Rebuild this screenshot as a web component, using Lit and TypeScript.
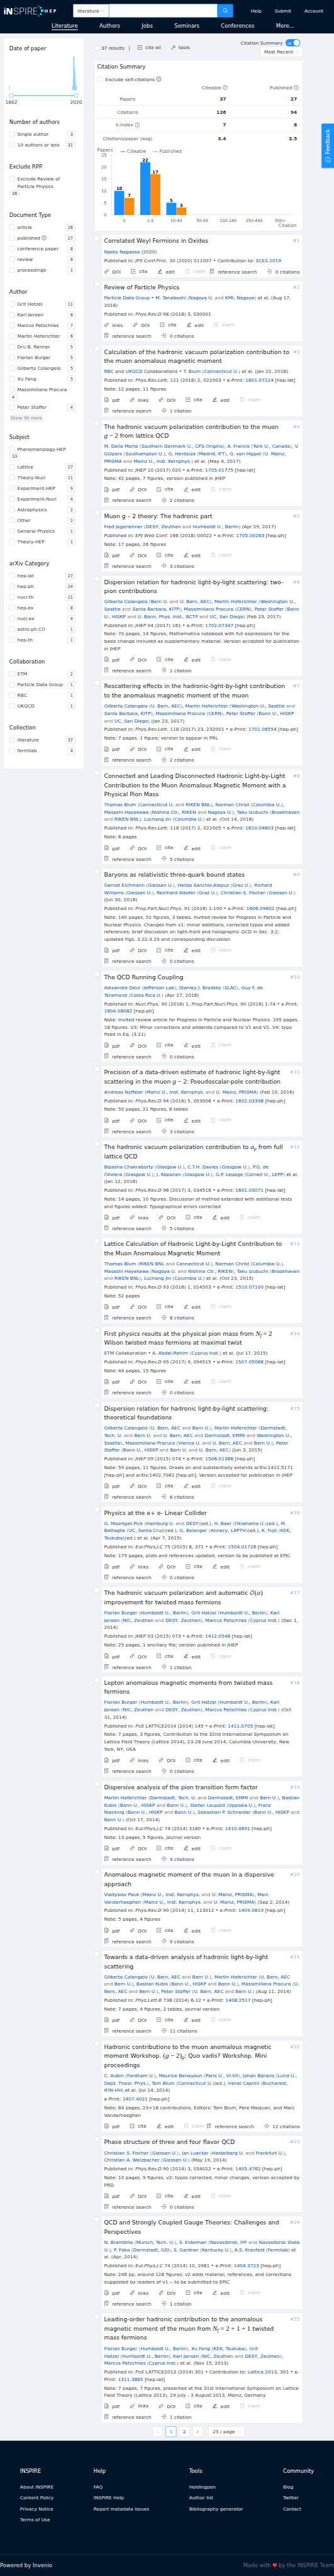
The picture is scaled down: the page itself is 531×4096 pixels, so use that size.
import { LitElement, html, svg, css } from "lit";
import { customElement, property } from "lit/decorators.js";

type Paper = {
  title: string;
  collab?: string;
  authors: string;
  tail: string;
  pub: string;
  note?: string;
  acts: string;
  cites: string;
};

const PAPERS: Paper[] = [
  { title: "Correlated Weyl Fermions in Oxides", authors: "Naoto Nagaosa", tail: "(2020)", pub: "Published in: _JPS Conf.Proc._ 30 (2020) 011007 • Contribution to: {SCES 2019}", acts: "DOI cite edit claim", cites: "0 citations" },
  { title: "Review of Particle Physics", collab: "{Particle Data Group} • ", authors: "M. Tanabashi|Nagoya U.|KMI, Nagoya", tail: "et al. (Aug 17, 2018)", pub: "Published in: _Phys.Rev.D_ 98 (2018) 3, 030001", acts: "links DOI cite edit claim", cites: "0 citations" },
  { title: "Calculation of the hadronic vacuum polarization contribution to the muon anomalous magnetic moment", collab: "{RBC} and {UKQCD} Collaborations • ", authors: "T. Blum|Connecticut U.", tail: "et al. (Jan 22, 2018)", pub: "Published in: _Phys.Rev.Lett._ 121 (2018) 2, 022003 • e-Print: {1801.07224} [hep-lat]", note: "12 pages, 11 figures", acts: "pdf links DOI cite edit claim", cites: "1 citation" },
  { title: "The hadronic vacuum polarization contribution to the muon $g−2$ from lattice QCD", authors: "M. Della Morte|Southern Denmark U., CP3-Origins;A. Francis|York U., Canada;V. Gülpers|Southampton U.;G. Herdoíza|Madrid, IFT;G. von Hippel|U. Mainz, PRISMA|Mainz U., Inst. Kernphys.", tail: "et al. (May 4, 2017)", pub: "Published in: _JHEP_ 10 (2017) 020 • e-Print: {1705.01775} [hep-lat]", note: "42 pages, 7 figures, version published in JHEP", acts: "pdf DOI cite edit claim", cites: "2 citations" },
  { title: "Muon g – 2 theory: The hadronic part", authors: "Fred Jegerlehner|DESY, Zeuthen|Humboldt U., Berlin", tail: "(Apr 29, 2017)", pub: "Published in: _EPJ Web Conf._ 166 (2018) 00022 • e-Print: {1705.00263} [hep-ph]", note: "17 pages, 26 figures", acts: "pdf DOI cite edit claim", cites: "3 citations" },
  { title: "Dispersion relation for hadronic light-by-light scattering: two-pion contributions", authors: "Gilberto Colangelo|Bern U.|U. Bern, AEC;Martin Hoferichter|Washington U., Seattle|Santa Barbara, KITP;Massimiliano Procura|CERN;Peter Stoffer|Bonn U., HISKP|U. Bonn, Phys. Inst., BCTP|UC, San Diego", tail: "(Feb 23, 2017)", pub: "Published in: _JHEP_ 04 (2017) 161 • e-Print: {1702.07347} [hep-ph]", note: "70 pages, 14 figures, Mathematica notebook with full expressions for the basis change included as supplementary material. Version accepted for publication in JHEP", acts: "pdf DOI cite edit claim", cites: "1 citation" },
  { title: "Rescattering effects in the hadronic-light-by-light contribution to the anomalous magnetic moment of the muon", authors: "Gilberto Colangelo|U. Bern, AEC;Martin Hoferichter|Washington U., Seattle|Santa Barbara, KITP;Massimiliano Procura|CERN;Peter Stoffer|Bonn U., HISKP|UC, San Diego", tail: "(Jan 23, 2017)", pub: "Published in: _Phys.Rev.Lett._ 118 (2017) 23, 232001 • e-Print: {1701.06554} [hep-ph]", note: "7 pages, 1 figure; version to appear in PRL", acts: "pdf DOI cite edit claim", cites: "2 citations" },
  { title: "Connected and Leading Disconnected Hadronic Light-by-Light Contribution to the Muon Anomalous Magnetic Moment with a Physical Pion Mass", authors: "Thomas Blum|Connecticut U.|RIKEN BNL;Norman Christ|Columbia U.;Masashi Hayakawa|Nishina Ctr., RIKEN|Nagoya U.;Taku Izubuchi|Brookhaven|RIKEN BNL;Luchang Jin|Columbia U.", tail: "et al. (Oct 14, 2016)", pub: "Published in: _Phys.Rev.Lett._ 118 (2017) 2, 022005 • e-Print: {1610.04603} [hep-lat]", note: "6 pages", acts: "pdf DOI cite edit claim", cites: "5 citations" },
  { title: "Baryons as relativistic three-quark bound states", authors: "Gernot Eichmann|Giessen U.;Helios Sanchis-Alepuz|Graz U.;Richard Williams|Giessen U.;Reinhard Alkofer|Graz U.;Christian S. Fischer|Giessen U.", tail: "(Jun 30, 2016)", pub: "Published in: _Prog.Part.Nucl.Phys._ 91 (2016) 1-100 • e-Print: {1606.09602} [hep-ph]", note: "140 pages, 52 figures, 3 tables. Invited review for Progress in Particle and Nuclear Physics. Changes from v1: minor additions, corrected typos and added references; brief discussion on light-front and holographic QCD in Sec. 3.2; updated Figs. 3.22-3.23 and corresponding discussion", acts: "pdf DOI cite edit claim", cites: "0 citations" },
  { title: "The QCD Running Coupling", authors: "Alexandre Deur|Jefferson Lab;Stanley J. Brodsky|SLAC;Guy F. de Teramond|Costa Rica U.", tail: "(Apr 27, 2016)", pub: "Published in: _Nucl.Phys._ 90 (2016) 1, _Prog.Part.Nucl.Phys._ 90 (2016) 1-74 • e-Print: {1604.08082} [hep-ph]", note: "Invited review article for Progress in Particle and Nuclear Physics. 195 pages, 18 figures. V3: Minor corrections and addenda compared to V1 and V2. V4: typo fixed in Eq. (3.21)", acts: "pdf DOI cite edit claim", cites: "0 citations" },
  { title: "Precision of a data-driven estimate of hadronic light-by-light scattering in the muon $g−2$: Pseudoscalar-pole contribution", authors: "Andreas Nyffeler|Mainz U., Inst. Kernphys.|U. Mainz, PRISMA", tail: "(Feb 10, 2016)", pub: "Published in: _Phys.Rev.D_ 94 (2016) 5, 053006 • e-Print: {1602.03398} [hep-ph]", note: "50 pages, 21 figures, 8 tables", acts: "pdf DOI cite edit claim", cites: "3 citations" },
  { title: "The hadronic vacuum polarization contribution to $a^μ$ from full lattice QCD", authors: "Bipasha Chakraborty|Glasgow U.;C.T.H. Davies|Glasgow U.;P.G. de Oliviera|Glasgow U.;J. Koponen|Glasgow U.;G.P. Lepage|Cornell U., LEPP", tail: "et al. (Jan 12, 2016)", pub: "Published in: _Phys.Rev.D_ 96 (2017) 3, 034516 • e-Print: {1601.03071} [hep-lat]", note: "14 pages, 10 figures. Discussion of method extended with additional tests and figures added. Typographical errors corrected", acts: "pdf links DOI cite edit claim", cites: "5 citations" },
  { title: "Lattice Calculation of Hadronic Light-by-Light Contribution to the Muon Anomalous Magnetic Moment", authors: "Thomas Blum|RIKEN BNL|Connecticut U.;Norman Christ|Columbia U.;Masashi Hayakawa|Nagoya U.|Nishina Ctr., RIKEN;Taku Izubuchi|Brookhaven|RIKEN BNL;Luchang Jin|Columbia U.", tail: "et al. (Oct 23, 2015)", pub: "Published in: _Phys.Rev.D_ 93 (2016) 1, 014503 • e-Print: {1510.07100} [hep-lat]", note: "52 pages", acts: "pdf DOI cite edit claim", cites: "8 citations" },
  { title: "First physics results at the physical pion mass from $N^f=2$ Wilson twisted mass fermions at maximal twist", collab: "{ETM} Collaboration • ", authors: "A. Abdel-Rehim|Cyprus Inst.", tail: "et al. (Jul 17, 2015)", pub: "Published in: _Phys.Rev.D_ 95 (2017) 9, 094515 • e-Print: {1507.05068} [hep-lat]", note: "44 pages, 15 figures", acts: "pdf DOI cite edit claim", cites: "0 citations" },
  { title: "Dispersion relation for hadronic light-by-light scattering: theoretical foundations", authors: "Gilberto Colangelo|U. Bern, AEC|Bern U.;Martin Hoferichter|Darmstadt, Tech. U.|Bern U.|U. Bern, AEC|Darmstadt, EMMI|Washington U., Seattle;Massimiliano Procura|Vienna U.|U. Bern, AEC|Bern U.;Peter Stoffer|Bonn U., HISKP|Bern U.|U. Bern, AEC", tail: "(Jun 3, 2015)", pub: "Published in: _JHEP_ 09 (2015) 074 • e-Print: {1506.01386} [hep-ph]", note: "59 pages, 11 figures. Draws on and substantially extends arXiv:1412.5171 [hep-ph] and arXiv:1402.7081 [hep-ph]. Version accepted for publication in JHEP", acts: "pdf DOI cite edit claim", cites: "6 citations" },
  { title: "Physics at the e+ e- Linear Collider", authors: "G. Moortgat-Pick|Hamburg U.|DESY|+;H. Baer|Oklahoma U.|+;M. Battaglia|UC, Santa Cruz|+;G. Belanger|Annecy, LAPTH|+;K. Fujii|KEK, Tsukuba|+", tail: "et al. (Apr 7, 2015)", pub: "Published in: _Eur.Phys.J.C_ 75 (2015) 8, 371 • e-Print: {1504.01726} [hep-ph]", note: "179 pages, plots and references updated, version to be published at EPJC", acts: "pdf links DOI cite edit claim", cites: "0 citations" },
  { title: "The hadronic vacuum polarization and automatic $O(a)$ improvement for twisted mass fermions", authors: "Florian Burger|Humboldt U., Berlin;Grit Hotzel|Humboldt U., Berlin;Karl Jansen|NIC, Zeuthen|DESY, Zeuthen;Marcus Petschlies|Cyprus Inst.", tail: "(Dec 1, 2014)", pub: "Published in: _JHEP_ 03 (2015) 073 • e-Print: {1412.0546} [hep-lat]", note: "25 pages, 1 ancillary file; version published in JHEP", acts: "pdf DOI cite edit claim", cites: "1 citation" },
  { title: "Lepton anomalous magnetic moments from twisted mass fermions", authors: "Florian Burger|Humboldt U., Berlin;Grit Hotzel|Humboldt U., Berlin;Karl Jansen|NIC, Zeuthen|DESY, Zeuthen;Marcus Petschlies|Cyprus Inst.", tail: "(Oct 31, 2014)", pub: "Published in: _PoS_ LATTICE2014 (2014) 145 • e-Print: {1411.0705} [hep-lat]", note: "7 pages, 3 figures, Contribution to the 32nd International Symposium on Lattice Field Theory (Lattice 2014), 23-28 June 2014, Columbia University, New York, NY, USA", acts: "pdf links DOI cite edit claim", cites: "0 citations" },
  { title: "Dispersive analysis of the pion transition form factor", authors: "Martin Hoferichter|Darmstadt, Tech. U.|Darmstadt, EMMI|Bern U.;Bastian Kubis|Bonn U., HISKP|Bonn U.;Stefan Leupold|Uppsala U.;Franz Niecknig|Bonn U., HISKP|Bonn U.;Sebastian P. Schneider|Bonn U., HISKP|Bonn U.", tail: "(Oct 17, 2014)", pub: "Published in: _Eur.Phys.J.C_ 74 (2014) 3180 • e-Print: {1410.4691} [hep-ph]", note: "13 pages, 5 figures, journal version", acts: "pdf DOI cite edit claim", cites: "4 citations" },
  { title: "Anomalous magnetic moment of the muon in a dispersive approach", authors: "Vladyslav Pauk|Mainz U., Inst. Kernphys.|U. Mainz, PRISMA;Marc Vanderhaeghen|Mainz U., Inst. Kernphys.|U. Mainz, PRISMA", tail: "(Sep 2, 2014)", pub: "Published in: _Phys.Rev.D_ 90 (2014) 11, 113012 • e-Print: {1409.0819} [hep-ph]", note: "5 pages, 4 figures", acts: "pdf DOI cite edit claim", cites: "9 citations" },
  { title: "Towards a data-driven analysis of hadronic light-by-light scattering", authors: "Gilberto Colangelo|U. Bern, AEC|Bern U.;Martin Hoferichter|U. Bern, AEC|Bern U.;Bastian Kubis|Bonn U., HISKP|Bonn U.;Massimiliano Procura|U. Bern, AEC|Bern U.;Peter Stoffer|U. Bern, AEC|Bern U.", tail: "(Aug 11, 2014)", pub: "Published in: _Phys.Lett.B_ 738 (2014) 6-12 • e-Print: {1408.2517} [hep-ph]", note: "7 pages, 4 figures, 2 tables, journal version", acts: "pdf DOI cite edit claim", cites: "11 citations" },
  { title: "Hadronic contributions to the muon anomalous magnetic moment Workshop. $(g−2)^μ$: Quo vadis? Workshop. Mini proceedings", authors: "C. Aubin|Fordham U.;Maurice Benayoun|Paris U., VI-VII;Johan Bijnens|Lund U., Dept. Theor. Phys.;Tom Blum|Connecticut U.|+;Irenel Caprini|Bucharest, IFIN-HH", tail: "et al. (Jul 14, 2014)", pub: "e-Print: {1407.4021} [hep-ph]", note: "84 pages, 23+18 contributions. Editors: Tom Blum, Pere Masjuan, and Marc Vanderhaeghen", acts: "pdf cite edit claim", cites: "12 citations" },
  { title: "Phase structure of three and four flavor QCD", authors: "Christian S. Fischer|Giessen U.;Jan Luecker|Heidelberg U.|Frankfurt U.;Christian A. Welzbacher|Giessen U.", tail: "(May 19, 2014)", pub: "Published in: _Phys.Rev.D_ 90 (2014) 3, 034022 • e-Print: {1405.4762} [hep-ph]", note: "10 pages, 9 figures, v2: typos corrected, minor changes, version accepted by PRD", acts: "pdf DOI cite edit claim", cites: "0 citations" },
  { title: "QCD and Strongly Coupled Gauge Theories: Challenges and Perspectives", authors: "N. Brambilla|Munich, Tech. U.;S. Eidelman|Novosibirsk, IYF|Novosibirsk State U.;P. Foka|Darmstadt, GSI;S. Gardner|Kentucky U.;A.S. Kronfeld|Fermilab", tail: "et al. (Apr, 2014)", pub: "Published in: _Eur.Phys.J.C_ 74 (2014) 10, 2981 • e-Print: {1404.3723} [hep-ph]", note: "246 pp, around 128 figures; v2 adds material, references, and corrections suggested by readers of v1 -- to be submitted to EPJC", acts: "pdf links DOI cite edit claim", cites: "1 citation" },
  { title: "Leading-order hadronic contribution to the anomalous magnetic moment of the muon from $N^f=2+1+1$ twisted mass fermions", authors: "Florian Burger|Humboldt U., Berlin;Xu Feng|KEK, Tsukuba;Grit Hotzel|Humboldt U., Berlin;Karl Jansen|NIC, Zeuthen|DESY, Zeuthen;Marcus Petschlies|Cyprus Inst.", tail: "et al. (Nov 15, 2013)", pub: "Published in: _PoS_ LATTICE2013 (2014) 301 • Contribution to: {Lattice 2013}, 301 • e-Print: {1311.3885} [hep-lat]", note: "7 pages, 7 figures, presented at the 31st International Symposium on Lattice Field Theory (Lattice 2013), 29 July - 3 August 2013, Mainz, Germany", acts: "pdf links* DOI cite edit claim", cites: "1 citation" },
];

const FACETS: { name: string; items: string[]; more?: string }[] = [
  { name: "Number of authors", items: ["Single author|3", "10 authors or less|31"] },
  { name: "Exclude RPP", items: ["Exclude Review of Particle Physics|36|w"] },
  { name: "Document Type", items: ["article|28", "published|27|q", "conference paper|8", "review|6", "proceedings|1"] },
  { name: "Author", items: ["Grit Hotzel|11", "Karl Jansen|8", "Marcus Petschlies|7", "Martin Hoferichter|6", "Dru B. Renner|5", "Florian Burger|5", "Gilberto Colangelo|5", "Xu Feng|5", "Massimiliano Procura|4|w", "Peter Stoffer|4"], more: "Show 90 more" },
  { name: "Subject", items: ["Phenomenology-HEP|33|w", "Lattice|27", "Theory-Nucl|11", "Experiment-HEP|9", "Experiment-Nucl|4", "Astrophysics|2", "Other|2", "General Physics|1", "Theory-HEP|1"] },
  { name: "arXiv Category", items: ["hep-lat|27", "hep-ph|24", "nucl-th|11", "hep-ex|8", "nucl-ex|4", "astro-ph.CO|1", "hep-th|1"] },
  { name: "Collaboration", items: ["ETM|2", "Particle Data Group|1", "RBC|1", "UKQCD|1"] },
  { name: "Collection", items: ["literature|37", "fermilab|4"] },
];

const stroke = (d: string, w = 72) => svg`<path d=${d} fill="none" stroke="currentColor" stroke-width=${w} />`;
const fill = (d: string) => svg`<path d=${d} fill="currentColor" />`;

const GLYPHS: Record<string, unknown> = {
  link: fill("M574 665.4a8.03 8.03 0 0 0-11.3 0L446.5 781.6c-53.8 53.8-144.6 59.5-204 0-59.5-59.5-53.8-150.2 0-204l116.2-116.2c3.1-3.1 3.1-8.2 0-11.3l-39.8-39.8a8.03 8.03 0 0 0-11.3 0L191.4 526.5c-84.6 84.6-84.6 221.5 0 306s221.5 84.6 306 0l116.2-116.2c3.1-3.1 3.1-8.2 0-11.3L574 665.4zm258.6-474c-84.6-84.6-221.5-84.6-306 0L410.3 307.6a8.03 8.03 0 0 0 0 11.3l39.7 39.7c3.1 3.1 8.2 3.1 11.3 0l116.2-116.2c53.8-53.8 144.6-59.5 204 0 59.5 59.5 53.8 150.2 0 204L665.3 562.6a8.03 8.03 0 0 0 0 11.3l39.8 39.8c3.1 3.1 8.2 3.1 11.3 0l116.2-116.2c84.5-84.6 84.5-221.5 0-306.1zM610.1 372.3a8.03 8.03 0 0 0-11.3 0L372.3 598.7a8.03 8.03 0 0 0 0 11.3l39.6 39.6c3.1 3.1 8.2 3.1 11.3 0l226.4-226.4c3.1-3.1 3.1-8.2 0-11.3l-39.5-39.6z"),
  edit: fill("M257.7 752c2 0 4-.2 6-.5L431.9 722c2-.4 3.9-1.3 5.3-2.8l423.9-423.9a9.96 9.96 0 0 0 0-14.1L694.9 114.9c-1.9-1.9-4.4-2.9-7.1-2.9s-5.2 1-7.1 2.9L256.8 538.8c-1.5 1.5-2.4 3.3-2.8 5.3l-29.5 168.2a33.5 33.5 0 0 0 9.4 29.8c6.6 6.4 14.9 9.9 23.8 9.9zm67.4-174.4L687.8 215l73.3 73.3-362.7 362.6-88.9 15.7 15.6-89zM880 836H144c-17.7 0-32 14.3-32 32v36c0 4.4 3.6 8 8 8h784c4.4 0 8-3.6 8-8v-36c0-17.7-14.3-32-32-32z"),
  cite: svg`${stroke("M880 290V148H140v728h740V734")}${stroke("M400 512H800")}${fill("M770 410L912 512 770 614z")}`,
  pdf: svg`${stroke("M190 100H610L834 324V924H190z")}${stroke("M590 110V346H824", 64)}${stroke("M480 440C520 600 600 690 730 700M500 500C470 650 400 760 310 800M340 770C430 680 560 650 740 690", 50)}`,
  ref: svg`${stroke("M470 924H180V100H820V480")}${stroke("M310 290H690M310 440H500", 60)}<circle cx="640" cy="690" r="125" fill="none" stroke="currentColor" stroke-width="66" />${stroke("M730 780L860 910", 70)}`,
  claim: svg`${stroke("M430 924H180V100H820V440")}${stroke("M310 290H690M310 440H500", 60)}<circle cx="680" cy="730" r="180" fill="none" stroke="currentColor" stroke-width="60" />${stroke("M600 730L665 795 770 670", 56)}`,
  cited: svg`${stroke("M250 250A370 370 0 1 1 250 774", 72)}${stroke("M40 512H540", 72)}${fill("M500 400L650 512 500 624z")}`,
  tool: svg`${stroke("M150 800L480 470C430 300 520 150 720 130L620 270 740 400 890 300C900 480 740 600 560 550L230 880z", 70)}`,
  down: stroke("M150 300L512 780L874 300", 76),
  left: stroke("M690 180L330 512L690 844", 80),
  right: stroke("M330 180L690 512L330 844", 80),
  search: svg`<circle cx="430" cy="430" r="290" fill="none" stroke="currentColor" stroke-width="84" />${stroke("M640 640L900 900", 90)}`,
  help: svg`<circle cx="512" cy="512" r="410" fill="none" stroke="currentColor" stroke-width="74" />${stroke("M400 430C400 270 630 280 626 425C620 520 512 510 512 620", 68)}${fill("M472 670h80v80h-80z")}`,
  chart: stroke("M100 120V860H930M270 760V560M430 760V380M590 760V480M750 760V280", 76),
  talk: svg`${stroke("M120 900V520A392 392 0 1 1 512 900z", 74)}${fill("M270 475h90v90h-90zM467 475h90v90h-90zM664 475h90v90h-90z")}`,
};

const icon = (name: string, size = 14) =>
  html`<svg class="ic" width=${size} height=${size} viewBox="64 64 896 896">${GLYPHS[name]}</svg>`;

const math = (src: string) => {
  const parts: unknown[] = [];
  const re = /\^(.)|([A-Za-z])|([−=+])|([^\^A-Za-z−=+])/g;
  let m: RegExpExecArray | null;
  while ((m = re.exec(src))) {
    if (m[1]) parts.push(html`<span class="low">${m[1]}</span>`);
    else if (m[2]) parts.push(m[2] === "O" ? html`<span class="cal">𝒪</span>` : html`<i>${m[2]}</i>`);
    else if (m[3]) parts.push(html`<span class="op">${m[3]}</span>`);
    else parts.push(m[4]);
  }
  return html`<span class="math">${parts}</span>`;
};

const rich = (src: string) =>
  src
    .split(/(\{[^}]*\}|_[^_]*_|\$[^$]*\$)/)
    .filter((s) => s)
    .map((s) =>
      s[0] === "{" ? html`<a>${s.slice(1, -1)}</a>` : s[0] === "_" ? html`<i>${s.slice(1, -1)}</i>` : s[0] === "$" ? math(s.slice(1, -1)) : s,
    );

const people = (src: string) =>
  src.split(";").map((entry, i) => {
    const bits = entry.split("|");
    const editor = bits[bits.length - 1] === "+";
    const affs = bits.slice(1, editor ? -1 : undefined);
    const places = affs.map((a, k) => html`${k ? " and " : ""}<a>${a}</a>`);
    return html`${i ? ", " : ""}<a>${bits[0]}</a>${affs.length ? html`<span class="aff">${"\u00a0"}(${places})</span>` : ""}${editor ? "(ed.)" : ""}`;
  });

const base = css`
  * { box-sizing: border-box; }
  .ic { display: block; flex: none; overflow: visible; }
  .box { width: 16px; height: 16px; border: 1px solid #d0d0d0; border-radius: 2px; background: #fff; flex: none; }
  a { color: #0050b3; }
`;

@customElement("paper-card")
class PaperCard extends LitElement {
  @property({ attribute: false }) paper!: Paper;
  @property({ type: Number }) n = 0;

  static styles = [
    base,
    css`
      :host { display: flex; align-items: flex-start; gap: 4.5px; }
      .box { margin-top: 2.5px; }
      .card { flex: 1; min-width: 0; background: #fff; border: 1px solid #e6e6e8; border-radius: 2px; padding: 6.2px 8.5px 0 8px; }
      .head { display: flex; justify-content: space-between; gap: 8px; }
      .title { font-size: 17.5px; line-height: 27.5px; color: #222; }
      .num { color: #adadad; line-height: 24px; flex: none; }
      .line { margin-bottom: 4px; line-height: 22px; }
      .people { margin-top: 5.8px; }
      .aff { color: #737373; }
      .acts { display: flex; flex-wrap: wrap; justify-content: space-between; padding-top: 3.3px; margin-bottom: 0.7px; }
      .group { display: flex; }
      .act { display: flex; align-items: center; gap: 10px; height: 32px; margin-right: 30.6px; position: relative; }
      .group .act:last-child { margin-right: 0; }
      .act .ic { margin-top: -3px; }
      .btn span { margin-top: -4px; }
      .btn { box-shadow: 0 2px 0 rgba(0, 0, 0, 0.018); }
      .off { color: #c2c2c2; box-shadow: none; }
      .math { font-family: "Liberation Serif", serif; font-size: 21.2px; line-height: 1; white-space: nowrap; }
      .op { padding: 0 4.6px; }
      .low { font-size: 15px; font-style: italic; position: relative; top: 4px; }
      .cal { font-family: "DejaVu Math TeX Gyre", "DejaVu Sans", serif; font-size: 18px; }
    `,
  ];

  act(name: string) {
    const drop = name.endsWith("*");
    const label = name.replace("*", "");
    const glyph = { DOI: "link", links: "link" }[label] ?? label;
    const cls = label === "claim" ? "act btn off" : label === "cite" || drop ? "act btn" : "act";
    return html`<div class=${cls}>${icon(glyph)}<span>${label}</span></div>`;
  }

  render() {
    const p = this.paper;
    return html`
      <div class="box"></div>
      <div class="card">
        <div class="head"><div class="title">${rich(p.title)}</div><div class="num">#${this.n}</div></div>
        <div class="line people">${p.collab ? rich(p.collab) : ""}${people(p.authors)} ${p.tail}</div>
        <div class="line">${rich(p.pub)}</div>
        <div class="line">${p.note ? html`Note: ${p.note}` : ""}</div>
        <div class="acts">
          <div class="group">${p.acts.split(" ").map((a) => this.act(a))}</div>
          <div class="group">
            <div class="act">${icon("ref")}<span>reference search</span></div>
            <div class="act">${icon("cited")}<span>${p.cites}</span></div>
          </div>
        </div>
      </div>
    `;
  }
}

@customElement("side-facets")
class SideFacets extends LitElement {
  static styles = [
    base,
    css`
      :host { display: block; width: 238px; background: #fff; padding: 16px 24px 0 16px; flex: none; }
      .name { font-size: 16px; line-height: 25px; color: #222; }
      .date { height: 219.8px; }
      .hist { display: block; overflow: visible; }
      .list { padding: 13.3px 0 31.7px; }
      .row { display: flex; justify-content: space-between; align-items: flex-start; padding-bottom: 9px; line-height: 22px; }
      .w { flex-direction: column; }
      .lab { display: flex; gap: 8px; }
      .lab .box { margin-top: 3px; }
      .lab .ic { margin: 4px 0 0 -3px; }
      .tag { height: 22px; margin-top: 1px; border: 1px solid #d9d9d9; border-radius: 2px; background: #fafafa; font-size: 12px; line-height: 20px; padding: 0 7px; }
      .w .tag { margin: 1px 0 -1px; }
      .more { width: 101px; height: 22px; margin-top: 1px; background: #f0f2f5; border-radius: 2px; color: #8c8c8c; font-size: 13px; line-height: 22px; text-align: center; white-space: nowrap; }
    `,
  ];

  render() {
    return html`
      <div class="date">
        <div class="name">Date of paper</div>
        <svg class="hist" width="198" height="160" viewBox="28 157 198 160">
          <path fill="#91d5ff" d="M28 257.500h2v12.500h-2zM216 257.500h2V232h1V170h4v37h2v12h1v25h1.500v13.500h2.500V270H216z" />
          <path stroke="#91d5ff" stroke-width="4" d="M34 286H228" />
          <circle cx="34" cy="286" r="6" fill="#fff" stroke="#91d5ff" stroke-width="2" />
          <circle cx="228" cy="286" r="6" fill="#fff" stroke="#91d5ff" stroke-width="2" />
          <g font-size="14" fill="#404040" text-anchor="middle"><text x="34" y="310">1862</text><text x="228" y="310">2020</text></g>
        </svg>
      </div>
      ${FACETS.map(
        (f) => html`
          <div class="name">${f.name}</div>
          <div class="list">
            ${f.items.map((it) => {
              const [label, count, flag] = it.split("|");
              return html`<div class=${flag === "w" ? "row w" : "row"}>
                <div class="lab"><div class="box"></div><span>${label}</span>${flag === "q" ? icon("help") : ""}</div>
                <div class="tag">${count}</div>
              </div>`;
            })}
            ${f.more ? html`<div class="more">${f.more}</div>` : ""}
          </div>
        `,
      )}
    `;
  }
}

@customElement("citation-summary")
class CitationSummary extends LitElement {
  static styles = [
    base,
    css`
      :host { display: block; height: 512.5px; background: #fff; border: 1px solid #e6e6e8; border-radius: 2px; padding: 7px 8px 0; margin-bottom: 9.3px; }
      .name { font-size: 16px; line-height: 25px; color: #222; }
      .self { display: flex; align-items: center; gap: 8px; height: 22px; margin-top: 13px; }
      .self .ic { margin-left: -3px; }
      .row { display: grid; grid-template-columns: 182px 208px 217px; height: 39px; align-items: center; border-bottom: 1px solid #e4e4e4; color: #5c5c5c; }
      .row:last-of-type { border: 0; }
      .hd { height: 29.5px; border: 0; }
      .row > div { display: flex; gap: 5px; justify-content: flex-end; align-items: center; padding-right: 4px; }
      .row > div:first-child { justify-content: center; padding: 0; }
      .row > div:last-child { padding-right: 9px; }
      .hd > div { padding-right: 0; }
      .hd > div:last-child { padding-right: 4px; }
      b { color: #333; }
      svg.plot { display: block; }
    `,
  ];

  render() {
    const y = (v: number) => 643 - v * 7.13;
    const bars = [[342, 10, 7], [420, 22, 17], [498, 5, 3]];
    const rows: [unknown, string, string][] = [
      ["Papers", "37", "27"],
      ["Citations", "126", "94"],
      [html`h-index ${icon("help")}`, "7", "6"],
      ["Citations/paper (avg)", "3.4", "3.5"],
    ];
    return html`
      <div class="name">Citation Summary</div>
      <div class="self"><div class="box"></div><span>Exclude self-citations</span>${icon("help", 15)}</div>
      <div class="row hd"><div></div><div>Citeable ${icon("help")}</div><div>Published ${icon("help")}</div></div>
      ${rows.map((r) => html`<div class="row"><div>${r[0]}</div><div><b>${r[1]}</b></div><div><b>${r[2]}</b></div></div>`)}
      <svg class="plot" width="607" height="256" viewBox="291 433.500 607 256">
        <path stroke="#e6e6e9" stroke-width="2" fill="none" d="M333.500 463V644M333 643H878" />
        <path stroke="#e6e6e9" stroke-width="1" fill="none"
          d="M327 465h12M327 500.500h12M327 536h12M327 571.500h12M327 607.500h12M327 643h12M372 637v12M449.500 637v12M527.500 637v12M605.500 637v12M683.500 637v12M761 637v12M839 637v12" />
        <g font-size="14" fill="#6b6b6b"><text x="291" y="455">Papers</text><text x="380" y="458">Citeable</text><text x="477" y="458">Published</text><text x="888" y="680" text-anchor="end">Citation</text></g>
        <path stroke="#1890ff" stroke-width="2" d="M361 454h14" /><path stroke="#fa8c16" stroke-width="2" d="M458 454h14" />
        <g font-size="12" fill="#595959" text-anchor="end">${[0, 5, 10, 15, 20, 25].map((v) => svg`<text x="319" y=${y(v) + 4.4}>${v}</text>`)}</g>
        <g font-size="12" fill="#595959" text-anchor="middle">
          ${["0", "1-9", "10-49", "50-99", "100-249", "250-499", "500+"].map((t, i) => svg`<text x=${372 + i * 77.8} y="665.500">${t}</text>`)}
        </g>
        ${bars.map(
          ([x, a, b]) => svg`
          <rect x=${x} y=${y(a)} width="30" height=${a * 7.13 + 1} fill="#1890ff" />
          <rect x=${x + 30} y=${y(b)} width="30" height=${b * 7.13 + 1} fill="#fa8c16" />
          <g font-size="12.500" font-weight="bold" text-anchor="middle"><text x=${x + 15} y=${y(a) - 2.5}>${a}</text><text x=${x + 45} y=${y(b) - 2.5}>${b}</text></g>`,
        )}
      </svg>
    `;
  }
}

@customElement("app-root")
class AppRoot extends LitElement {
  static styles = [
    base,
    css`
      :host { display: block; width: 531px; height: 4096px; overflow: hidden; }
      .page { position: relative; width: 1000px; height: 7710px; transform: scale(0.531, 0.53126); transform-origin: 0 0; display: flex; flex-direction: column; background: #f0f2f5; font: 14px/22px "DejaVu Sans", sans-serif; color: #3d3d3d; }
      header { height: 100px; background: #001529; color: #f2f3f5; flex: none; }
      .top { display: flex; align-items: center; height: 64px; padding: 0 32px 0 12px; }
      .logo { display: block; width: 160px; height: 40px; margin: 2px 47px 0 0; overflow: visible; }
      .kind { width: 107px; height: 40px; border: 1px solid #d9d9d9; border-right: 0; border-radius: 2px 0 0 2px; background: #fafafa; color: #404040; display: flex; align-items: center; justify-content: space-between; padding: 0 12px; }
      .kind .ic, .sort .ic, .per .ic { color: #b8b8b8; }
      .field { width: 325px; height: 40px; background: #fff; border: 1px solid #40a9ff; box-shadow: 0 0 0 2px rgba(24, 144, 255, 0.2); }
      .go { width: 47px; height: 40px; background: #1890ff; border-radius: 0 2px 2px 0; display: flex; align-items: center; justify-content: center; }
      .user { margin-left: auto; display: flex; gap: 39.5px; }
      nav { display: flex; gap: 64.7px; padding: 2px 0 0 154.500px; font-size: 16px; line-height: 22px; }
      .on { border-bottom: 2px solid #fff; color: #fff; }
      .body { flex: 1; display: flex; align-items: flex-start; gap: 32px; padding: 16px 93px 0 12px; }
      main { width: 625px; }
      .bar { display: flex; height: 63.5px; }
      .res { display: flex; align-items: center; gap: 5px; height: 56px; }
      .sep { width: 1px; height: 15px; background: #333; margin: 0 19px 0 10px; }
      .tool { display: flex; align-items: center; gap: 9px; height: 32px; margin: -5px 25px 0 0; box-shadow: 0 2px 0 rgba(0, 0, 0, 0.018); }
      .right { margin-left: auto; display: flex; flex-direction: column; align-items: flex-end; padding-top: 1px; }
      .sum { display: flex; gap: 8px; margin-right: 8px; }
      .switch { width: 44px; height: 22px; border-radius: 11px; background: #1890ff; color: #fff; display: flex; align-items: center; justify-content: space-between; padding: 0 2px 0 7px; }
      .knob { width: 18px; height: 18px; border-radius: 9px; background: #fff; }
      .sort, .per { height: 32px; border: 1px solid #d9d9d9; border-radius: 2px; background: #fff; display: flex; align-items: center; justify-content: space-between; padding: 0 11px 0 12px; }
      .sort { width: 129px; }
      paper-card { margin-bottom: 9.2px; }
      .pages { display: flex; justify-content: center; gap: 8px; }
      .pg { width: 32px; height: 32px; border: 1px solid #d9d9d9; border-radius: 2px; background: #fff; display: flex; align-items: center; justify-content: center; }
      .cur { border-color: #1890ff; color: #1890ff; }
      .dim { color: #bfbfbf; }
      .per { width: 109px; margin-left: 8px; }
      footer { height: 405px; background: #001529; color: #e2e5e8; flex: none; }
      .cols { display: flex; justify-content: space-between; height: 340px; padding: 79px 60px 0; border-bottom: 1px solid #3a4a5b; }
      .col { display: flex; flex-direction: column; gap: 11.200px; }
      .h { font-size: 16px; line-height: 25px; color: #fff; margin-bottom: 11.5px; }
      .foot { display: flex; justify-content: space-between; font-size: 16px; line-height: 25px; padding-top: 20.5px; }
      .made { color: #64717e; }
      .heart { width: 13px; height: 12px; }
      .feedback { position: absolute; top: 370px; right: 0; width: 37px; height: 132px; background: #1890ff; color: #fff; border-radius: 2px 0 0 2px; display: flex; align-items: center; justify-content: center; box-shadow: 0 1px 3px rgba(0, 0, 0, 0.25); }
      .spin { transform: rotate(-90deg); display: flex; align-items: center; gap: 8px; font-size: 15.7px; flex: none; }
    `,
  ];

  render() {
    const cols = [
      ["INSPIRE", "About INSPIRE", "Content Policy", "Privacy Notice", "Terms of Use"],
      ["Help", "FAQ", "INSPIRE Help", "Report metadata issues"],
      ["Tools", "Holdingpen", "Author list", "Bibliography generator"],
      ["Community", "Blog", "Twitter", "Contact"],
    ];
    return html`
      <div class="page">
        <header>
          <div class="top">
            <svg class="logo" viewBox="12 13 160 40">
              <rect x="12.200" y="29" width="4.400" height="13.500" fill="#fff" />
              <circle cx="14.300" cy="25" r="2.300" fill="#23d5f5" />
              <g fill="#fff" font-family="Open Sans, sans-serif">
                <text x="17.500" y="42.500" font-size="27" font-weight="800" textLength="21" lengthAdjust="spacingAndGlyphs">N</text>
                <text x="39.500" y="42.500" font-family="Inter, sans-serif" font-size="26.500" font-weight="200" textLength="74" lengthAdjust="spacingAndGlyphs">SPIRE</text>
                <text x="133.500" y="37" font-size="13.500" font-weight="700" textLength="34.500">HEP</text>
              </g>
              <g fill="#23d5f5"><circle cx="116" cy="18.700" r="1.800" /><circle cx="122" cy="23" r="3" /><circle cx="126" cy="32" r="4.400" /><circle cx="122" cy="42" r="3" /><circle cx="116" cy="47.500" r="1.800" /></g>
            </svg>
            <div class="kind">literature ${icon("down", 10)}</div>
            <div class="field"></div>
            <div class="go">${icon("search", 16)}</div>
            <div class="user"><span>Help</span><span>Submit</span><span>Account</span></div>
          </div>
          <nav><span class="on">Literature</span><span>Authors</span><span>Jobs</span><span>Seminars</span><span>Conferences</span><span>More...</span></nav>
        </header>
        <div class="body">
          <side-facets></side-facets>
          <main>
            <div class="bar">
              <div class="res">
                <div class="box"></div><span>37 results</span><div class="sep"></div>
                <div class="tool">${icon("cite")}<span>cite all</span></div>
                <div class="tool">${icon("tool")}<span>tools</span></div>
              </div>
              <div class="right">
                <div class="sum"><span>Citation Summary</span><div class="switch">${icon("chart", 12)}<div class="knob"></div></div></div>
                <div class="sort">Most Recent ${icon("down", 10)}</div>
              </div>
            </div>
            <citation-summary></citation-summary>
            ${PAPERS.map((p, i) => html`<paper-card .paper=${p} .n=${i + 1}></paper-card>`)}
            <div class="pages">
              <div class="pg dim">${icon("left", 12)}</div><div class="pg cur">1</div><div class="pg">2</div><div class="pg">${icon("right", 12)}</div>
              <div class="per">25 / page ${icon("down", 10)}</div>
            </div>
          </main>
        </div>
        <footer>
          <div class="cols">${cols.map((c) => html`<div class="col">${c.map((t, i) => html`<div class=${i ? "" : "h"}>${t}</div>`)}</div>`)}</div>
          <div class="foot">
            <span>Powered by Invenio</span>
            <span class="made">Made with <svg class="heart" viewBox="0 0 24 22"><path fill="#ff3b30" d="M12 22C4 15 0 11 0 6.500C0 3 3 0 6.500 0C9 0 11 1.500 12 3.500C13 1.500 15 0 17.500 0C21 0 24 3 24 6.500C24 11 20 15 12 22z" /></svg> by the INSPIRE Team</span>
          </div>
        </footer>
        <div class="feedback"><div class="spin">${icon("talk", 16)}<span>Feedback</span></div></div>
      </div>
    `;
  }
}
